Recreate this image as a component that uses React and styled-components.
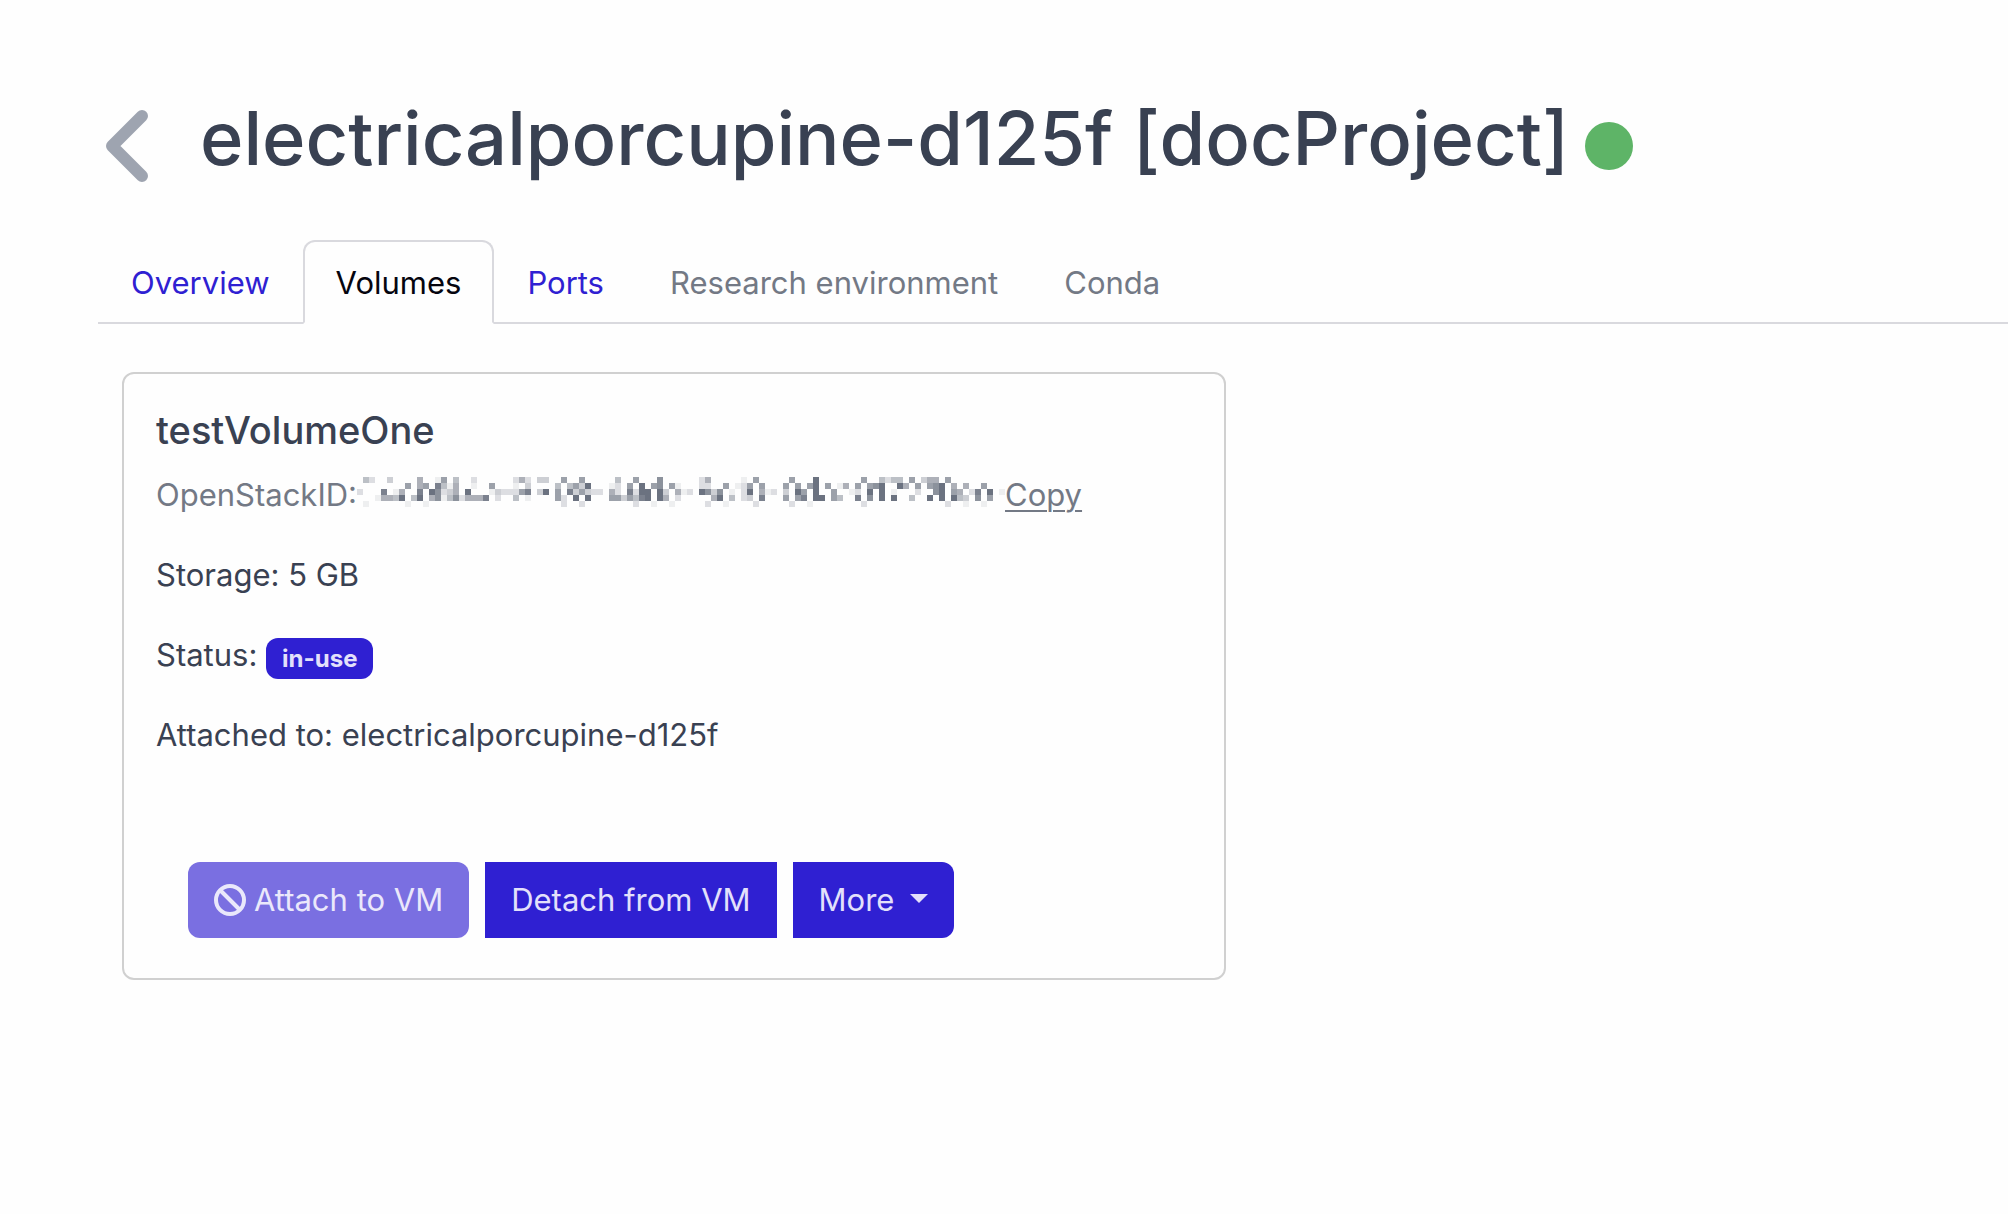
import React from "react";
import styled, { createGlobalStyle, css } from "styled-components";

const colors = {
  text: "#394152",
  muted: "#737985",
  faint: "#9ea4b0",
  primary: "#2f20d2",
  onPrimary: "#e3e0fb",
  line: "#d9d9de",
  cardLine: "#d0d0d0",
  running: "#5eb467",
};

const GlobalStyle = createGlobalStyle`
  *, *::before, *::after { box-sizing: border-box; }
  body {
    margin: 0;
    background: #fefefe;
    color: ${colors.text};
    font-family: Inter, "Liberation Sans", sans-serif;
    font-size: 31px;
    line-height: 48px;
  }
  h1, h2, p { margin: 0; }
`;

const Page = styled.main`
  padding: 90px 0 0 98px;
`;

const Header = styled.header`
  display: flex;
  align-items: center;
  height: 112px;
  padding-left: 8px;
`;

const BackLink = styled.a`
  display: flex;
  margin-right: 52px;
  color: ${colors.faint};
`;

const Title = styled.h1`
  margin-right: 16px;
  font-size: 74px;
  font-weight: 500;
  line-height: 96px;
  padding-bottom: 16px;
  white-space: nowrap;
`;

const StatusDot = styled.span`
  flex: none;
  width: 48px;
  height: 48px;
  border-radius: 50%;
  background: ${colors.running};
`;

const Tabs = styled.nav`
  display: flex;
  margin-top: 38px;
  border-bottom: 2px solid ${colors.line};
`;

const Tab = styled.a`
  margin-bottom: -2px;
  padding: 17px 31px 15px;
  border: 2px solid transparent;
  border-radius: 12px 12px 0 0;
  color: ${(p) => (p.$disabled ? colors.muted : colors.primary)};
  text-decoration: none;
  white-space: nowrap;
  ${(p) =>
    p.$active &&
    css`
      color: #05050f;
      background: #fefefe;
      border-color: ${colors.line} ${colors.line} #fefefe;
    `}
`;

const Card = styled.section`
  max-width: 1104px;
  margin: 48px 24px;
  padding: 32px;
  border: 2px solid ${colors.cardLine};
  border-radius: 12px;
`;

const CardTitle = styled.h2`
  margin-bottom: 17px;
  font-size: 38px;
  font-weight: 500;
  line-height: 48px;
`;

const Field = styled.p`
  display: flex;
  align-items: center;
  margin-bottom: 32px;
  white-space: pre;
  color: ${(p) => (p.$muted ? colors.muted : colors.text)};
`;

const Redacted = styled.svg`
  flex: none;
  shape-rendering: crispEdges;
`;

const CopyLink = styled.a`
  color: inherit;
  text-decoration-thickness: 2px;
  text-underline-offset: 4px;
`;

const Badge = styled.span`
  margin-top: 6px;
  padding: 0 16px;
  border-radius: 12px;
  background: ${colors.primary};
  color: ${colors.onPrimary};
  font-size: 24px;
  font-weight: 700;
  line-height: 41px;
`;

const Actions = styled.div`
  display: flex;
  gap: 16px;
  padding: 71px 32px 8px;
`;

const Button = styled.button`
  display: flex;
  align-items: center;
  gap: 8px;
  padding: 14px 26px;
  border: 0;
  border-radius: ${(p) => p.$radius || "0"};
  background: ${colors.primary};
  color: ${colors.onPrimary};
  font: inherit;
  white-space: nowrap;
  &:disabled {
    background: #7a6fe1;
    color: #eae8fb;
  }
`;

const Caret = styled.span`
  margin: 0 0 4px 8px;
  border: 9px solid transparent;
  border-top-color: currentColor;
  border-bottom: 0;
`;

/* Coverage of each mosaic block, from 0 (blank) to 9 (solid). */
const mosaic = [
  "042003000050016040020000002" + "520330060060000040060007000" + "000250000010600000600090000" + "000600424406035506000000000",
  "000000006056084150010060001" + "030000404639000120609067061" + "000220060126060006060690601" + "506067900950606790505006000",
  "200080150080972350900013222" + "680390608363220520829909305" + "120973701029051203096090060" + "012090901000200790650280901",
  "000155490490571472555802004" + "010000620909000663648909502" + "000005904023080006068099064" + "008070909004009090943070600",
  "010000001001000000000000000" + "000000020020000000020010010" + "000020010000200000200100000" + "000200000000000002001001000",
];

function HiddenId() {
  const cell = 6;
  return (
    <Redacted width={108 * cell} height={36} role="img" aria-label="Hidden identifier">
      {mosaic.flatMap((row, y) =>
        [...row].map((level, x) =>
          level === "0" ? null : (
            <rect
              key={`${x}-${y}`}
              x={x * cell}
              y={y * cell}
              width={cell}
              height={cell}
              fill="#6b7280"
              fillOpacity={level / 9}
            />
          )
        )
      )}
    </Redacted>
  );
}

const tabs = [
  { label: "Overview" },
  { label: "Volumes", active: true },
  { label: "Ports" },
  { label: "Research environment", disabled: true },
  { label: "Conda", disabled: true },
];

export default function App() {
  return (
    <Page>
      <GlobalStyle />
      <Header>
        <BackLink href="#back" aria-label="Back">
          <svg width="42" height="72" viewBox="0 0 42 72" fill="none" stroke="currentColor" strokeWidth="12" strokeLinecap="round" strokeLinejoin="round">
            <path d="M36 6 L6 36 L36 66" />
          </svg>
        </BackLink>
        <Title>electricalporcupine-d125f [docProject]</Title>
        <StatusDot role="img" aria-label="Running" />
      </Header>

      <Tabs>
        {tabs.map((t) => (
          <Tab
            key={t.label}
            href="#tab"
            $active={t.active}
            $disabled={t.disabled}
            aria-current={t.active ? "page" : undefined}
            aria-disabled={t.disabled}
          >
            {t.label}
          </Tab>
        ))}
      </Tabs>

      <Card>
        <CardTitle>testVolumeOne</CardTitle>
        <Field $muted>
          OpenStackID:
          <HiddenId />
          <CopyLink href="#copy">Copy</CopyLink>
        </Field>
        <Field>Storage: 5 GB</Field>
        <Field>
          {"Status: "}
          <Badge>in-use</Badge>
        </Field>
        <Field>Attached to: electricalporcupine-d125f</Field>
        <Actions>
          <Button type="button" disabled $radius="12px">
            <svg width="32" height="32" viewBox="0 0 32 32" fill="none" stroke="currentColor" strokeWidth="4" aria-hidden="true">
              <circle cx="16" cy="16" r="14" />
              <path d="M6 6 L26 26" />
            </svg>
            Attach to VM
          </Button>
          <Button type="button">Detach from VM</Button>
          <Button type="button" $radius="0 12px 12px 0" aria-haspopup="menu">
            More
            <Caret />
          </Button>
        </Actions>
      </Card>
    </Page>
  );
}
